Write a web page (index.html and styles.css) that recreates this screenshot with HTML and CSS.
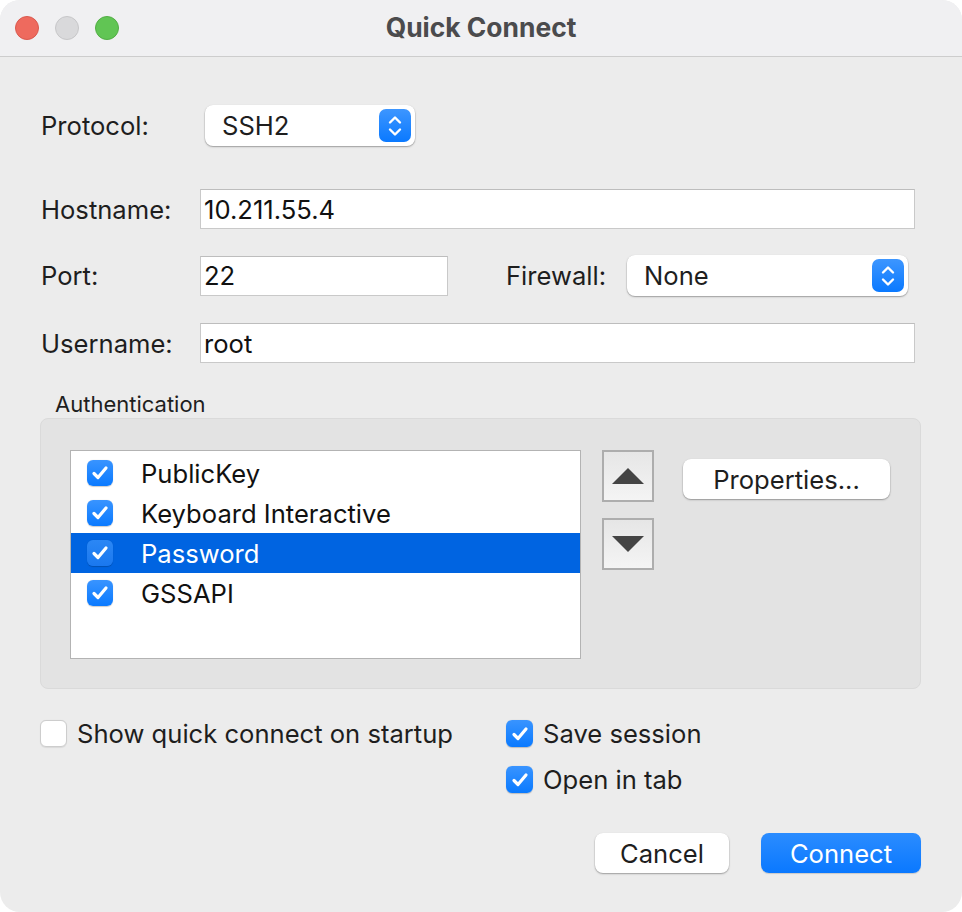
FILE: index.html
```html
<!DOCTYPE html>
<html>
<head>
<meta charset="utf-8">
<link rel="stylesheet" href="styles.css">
</head>
<body>
<div class="window">
  <div class="titlebar">
    <div class="lights">
      <span class="light red"></span>
      <span class="light gray"></span>
      <span class="light green"></span>
    </div>
    <div class="title">Quick Connect</div>
  </div>
  <div class="content">
    <div class="row row-protocol">
      <div class="label">Protocol:</div>
      <div class="popup popup-protocol">
        <span class="popup-text">SSH2</span>
        <span class="stepper"><svg width="16" height="22" viewBox="0 0 16 22"><path d="M3 7.5 L8 2.5 L13 7.5 M3 14.5 L8 19.5 L13 14.5" fill="none" stroke="#fff" stroke-width="2.4" stroke-linecap="round" stroke-linejoin="round"/></svg></span>
      </div>
    </div>
    <div class="row row-host">
      <div class="label">Hostname:</div>
      <div class="field field-wide">10.211.55.4</div>
    </div>
    <div class="row row-port">
      <div class="label">Port:</div>
      <div class="field field-port">22</div>
      <div class="label label-fw">Firewall:</div>
      <div class="popup popup-fw">
        <span class="popup-text">None</span>
        <span class="stepper"><svg width="16" height="22" viewBox="0 0 16 22"><path d="M3 7.5 L8 2.5 L13 7.5 M3 14.5 L8 19.5 L13 14.5" fill="none" stroke="#fff" stroke-width="2.4" stroke-linecap="round" stroke-linejoin="round"/></svg></span>
      </div>
    </div>
    <div class="row row-user">
      <div class="label">Username:</div>
      <div class="field field-wide">root</div>
    </div>
    <div class="group-label">Authentication</div>
    <div class="group">
      <div class="list">
        <div class="item"><span class="cb on"><svg width="18" height="16" viewBox="0 0 18 16"><path d="M3 8.5 L7 12.5 L15 3" fill="none" stroke="#fff" stroke-width="3.2" stroke-linecap="round" stroke-linejoin="round"/></svg></span><span class="item-text">PublicKey</span></div>
        <div class="item"><span class="cb on"><svg width="18" height="16" viewBox="0 0 18 16"><path d="M3 8.5 L7 12.5 L15 3" fill="none" stroke="#fff" stroke-width="3.2" stroke-linecap="round" stroke-linejoin="round"/></svg></span><span class="item-text">Keyboard Interactive</span></div>
        <div class="item selected"><span class="cb on"><svg width="18" height="16" viewBox="0 0 18 16"><path d="M3 8.5 L7 12.5 L15 3" fill="none" stroke="#fff" stroke-width="3.2" stroke-linecap="round" stroke-linejoin="round"/></svg></span><span class="item-text">Password</span></div>
        <div class="item"><span class="cb on"><svg width="18" height="16" viewBox="0 0 18 16"><path d="M3 8.5 L7 12.5 L15 3" fill="none" stroke="#fff" stroke-width="3.2" stroke-linecap="round" stroke-linejoin="round"/></svg></span><span class="item-text">GSSAPI</span></div>
      </div>
      <div class="arrows">
        <div class="arrow-btn"><svg width="32" height="18" viewBox="0 0 32 18"><path d="M0 17 L16 1 L32 17 Z" fill="#444"/></svg></div>
        <div class="arrow-btn"><svg width="32" height="18" viewBox="0 0 32 18"><path d="M0 1 L16 17 L32 1 Z" fill="#444"/></svg></div>
      </div>
      <div class="btn btn-props">Properties...</div>
    </div>
    <div class="options">
      <div class="opt-col opt-left">
        <div class="check"><span class="cb off"></span><span>Show quick connect on startup</span></div>
      </div>
      <div class="opt-col">
        <div class="check"><span class="cb on"><svg width="18" height="16" viewBox="0 0 18 16"><path d="M3 8.5 L7 12.5 L15 3" fill="none" stroke="#fff" stroke-width="3.2" stroke-linecap="round" stroke-linejoin="round"/></svg></span><span>Save session</span></div>
        <div class="check"><span class="cb on"><svg width="18" height="16" viewBox="0 0 18 16"><path d="M3 8.5 L7 12.5 L15 3" fill="none" stroke="#fff" stroke-width="3.2" stroke-linecap="round" stroke-linejoin="round"/></svg></span><span>Open in tab</span></div>
      </div>
    </div>
    <div class="buttons">
      <div class="btn btn-cancel">Cancel</div>
      <div class="btn btn-primary">Connect</div>
    </div>
  </div>
</div>
</body>
</html>
```
FILE: styles.css
```css
* { box-sizing: border-box; }
html, body { margin: 0; padding: 0; background: #ffffff; }
body { width: 962px; height: 912px; overflow: hidden; }
.window {
  width: 962px;
  height: 912px;
  background: #ececec;
  border-radius: 20px;
  overflow: hidden;
  font-family: "Inter", "Liberation Sans", sans-serif;
  font-size: 25.6px;
  color: #1e1e1e;
  display: flex;
  flex-direction: column;
}
.titlebar {
  height: 57px;
  flex: none;
  background: #f0f0f2;
  border-bottom: 1px solid #cdcdcd;
  display: flex;
  align-items: center;
  justify-content: center;
  position: relative;
}
.lights {
  position: absolute;
  left: 15px;
  top: 16px;
  display: flex;
  gap: 16px;
}
.light {
  width: 24px;
  height: 24px;
  border-radius: 50%;
  display: block;
}
.red { background: #ee6a5e; border: 1px solid #d9594e; }
.gray { background: #d9d9db; border: 1px solid #c6c6c8; }
.green { background: #61c554; border: 1px solid #52ad45; }
.title {
  font-weight: 700;
  font-size: 26.4px;
  color: #4b4b4d;
  margin-top: -3px;
}
.content {
  flex: 1;
  padding: 0 41px 0 41px;
  display: flex;
  flex-direction: column;
}
.row {
  display: flex;
  align-items: center;
}
.label {
  width: 159px;
  flex: none;
}
.row-protocol { margin-top: 48px; height: 41px; }
.row-protocol .label { width: 164px; }
.row-host { margin-top: 43px; height: 40px; }
.row-port { margin-top: 26px; height: 41px; }
.row-user { margin-top: 27px; height: 40px; }
.field {
  height: 40px;
  background: #fff;
  border: 1px solid #c9c9c9;
  border-top-color: #bdbdbd;
  padding: 0 0 0 3px;
  display: flex;
  align-items: center;
  color: #111;
}
.field-wide { width: 715px; }
.field-port { width: 248px; }
.label-fw { width: auto; margin-left: 58px; margin-right: 21px; }
.popup {
  height: 41px;
  background: #fff;
  border-radius: 8px;
  box-shadow: 0 0.5px 0 0.5px rgba(0,0,0,0.10), 0 1px 2px rgba(0,0,0,0.25);
  display: flex;
  align-items: center;
  justify-content: space-between;
  padding: 0 4px 0 17px;
}
.popup-protocol { width: 210px; }
.popup-fw { width: 281px; }
.popup-text { color: #1e1e1e; }
.stepper {
  width: 32px;
  height: 33px;
  border-radius: 7px;
  background: linear-gradient(#3d96ff, #0a79ff);
  display: flex;
  align-items: center;
  justify-content: center;
}
.group-label {
  margin-top: 27px;
  margin-left: 14px;
  font-size: 22px;
  height: 28px;
  line-height: 28px;
}
.group {
  margin-top: 0;
  width: 881px;
  height: 271px;
  margin-left: -1px;
  background: #e3e3e3;
  border: 1px solid #dadada;
  border-radius: 8px;
  display: flex;
  align-items: flex-start;
  padding: 31px 0 0 29px;
}
.list {
  width: 511px;
  height: 209px;
  background: #fff;
  border: 1px solid #b3b3b3;
  padding-top: 2px;
  flex: none;
}
.item {
  height: 40px;
  display: flex;
  align-items: center;
  padding-left: 16px;
  color: #111;
}
.item.selected { background: #0064e1; color: #fff; }
.item-text { margin-left: 28px; }
.cb {
  width: 26px;
  height: 26px;
  border-radius: 6px;
  display: inline-flex;
  align-items: center;
  justify-content: center;
  flex: none;
}
.cb.on { background: linear-gradient(#3994ff, #0a7aff); box-shadow: 0 0.5px 1px rgba(0,0,0,0.2); }
.item.selected .cb.on { background: linear-gradient(#2b87f5, #1a78ef); }
.cb.off { background: #fff; border: 1px solid #cdcdcd; box-shadow: 0 0.5px 1px rgba(0,0,0,0.08); }
.arrows {
  margin-left: 21px;
  display: flex;
  flex-direction: column;
  gap: 16px;
}
.arrow-btn {
  width: 52px;
  height: 52px;
  border: 2px solid #adadad;
  background: linear-gradient(#e6e6e6, #f4f4f4);
  display: flex;
  align-items: center;
  justify-content: center;
}
.btn {
  height: 40px;
  border-radius: 8px;
  display: flex;
  align-items: center;
  justify-content: center;
  background: #fff;
  box-shadow: 0 0.5px 0 0.5px rgba(0,0,0,0.08), 0 1px 2px rgba(0,0,0,0.28);
  color: #1e1e1e;
}
.btn-props { width: 207px; margin-left: 29px; margin-top: 9px; }
.options {
  margin-top: 31px;
  display: flex;
  margin-left: -1px;
}
.opt-col { display: flex; flex-direction: column; gap: 19px; }
.opt-left { width: 466px; }
.check {
  display: flex;
  align-items: center;
  height: 27px;
}
.check .cb { width: 27px; height: 27px; margin-right: 10px; }
.buttons {
  margin-top: 40px;
  display: flex;
  justify-content: flex-end;
  gap: 32px;
}
.btn-cancel { width: 134px; height: 40px; }
.btn-primary {
  width: 160px;
  height: 40px;
  color: #fff;
  background: linear-gradient(#2b8cff, #0a78ff);
  box-shadow: 0 1px 1px rgba(0,0,0,0.15);
}
```
